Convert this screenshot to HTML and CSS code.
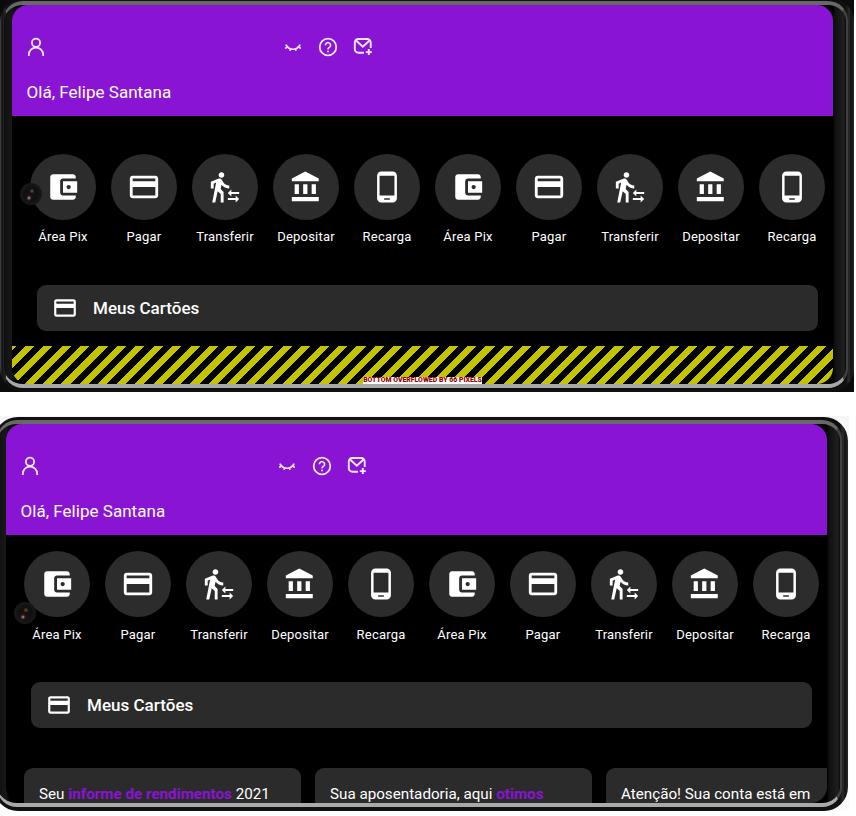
FILE: index.html
```html
<!DOCTYPE html>
<html lang="pt-BR">
<head>
<meta charset="utf-8">
<title>Início</title>
<link rel="stylesheet" href="styles.css">
</head>
<body>
<svg class="sprite" aria-hidden="true">
  <symbol id="wallet" viewBox="0 0 24 24"><path d="M21 18v1c0 1.1-.9 2-2 2H5c-1.11 0-2-.9-2-2V5c0-1.1.89-2 2-2h14c1.1 0 2 .9 2 2v1h-9c-1.11 0-2 .9-2 2v8c0 1.1.89 2 2 2h9zm-9-2h10V8H12v8zm4-2.5c-.83 0-1.5-.67-1.5-1.5s.67-1.5 1.5-1.5 1.5.67 1.5 1.5-.67 1.5-1.5 1.5z"/></symbol>
  <symbol id="card" viewBox="0 0 24 24"><path d="M20 4H4c-1.11 0-1.99.89-1.99 2L2 18c0 1.11.89 2 2 2h16c1.11 0 2-.89 2-2V6c0-1.11-.89-2-2-2zm0 14H4v-6h16v6zm0-10H4V6h16v2z"/></symbol>
  <symbol id="transfer" viewBox="0 0 24 24"><path d="M16.49 15.5v-1.75L14 16.25l2.49 2.5V17H22v-1.5zM19.51 19.75H14v1.5h5.51V23L22 20.5 19.51 18zM9.5 5.5c1.1 0 2-.9 2-2s-.9-2-2-2-2 .9-2 2 .9 2 2 2zM5.75 8.9L3 23h2.1l1.75-8L9 17v6h2v-7.55L8.95 13.4l.6-3C10.85 12 12.8 13 15 13v-2c-1.85 0-3.45-1-4.35-2.45l-.95-1.6C9.35 6.35 8.7 6 8 6c-.25 0-.5.05-.75.15L2 8.3V13h2V9.65l1.75-.75"/></symbol>
  <symbol id="bank" viewBox="0 0 24 24"><path d="M4 10v7h3v-7H4zm6 0v7h3v-7h-3zM2 22h19v-3H2v3zm14-12v7h3v-7h-3zm-4.5-9L2 6v2h19V6l-9.5-5z"/></symbol>
  <symbol id="phone" viewBox="0 0 24 24"><path d="M16 1H8C6.34 1 5 2.34 5 4v16c0 1.66 1.34 3 3 3h8c1.66 0 3-1.34 3-3V4c0-1.66-1.34-3-3-3zm-2 20h-4v-1h4v1zm3.25-3H6.75V4h10.5v14z"/></symbol>
  <symbol id="user" viewBox="0 0 20 20"><g fill="none" stroke="currentColor" stroke-width="1.8"><circle cx="10" cy="5.8" r="4.1"/><path d="M2.8 19v-1.200a7.200 7.200 0 0 1 14.400 0V19"/></g></symbol>
  <symbol id="eye" viewBox="0 0 20 20"><g fill="none" stroke="currentColor" stroke-width="1.700" stroke-linecap="round"><path d="M3.200 8.200C6.500 13.600 13.500 13.600 16.800 8.200"/><path d="M4.500 9.900l-1.700 1.100M7.700 11.900l-.6 1.200M12.300 11.900l.6 1.200M15.500 9.900l1.700 1.100"/></g></symbol>
  <symbol id="help" viewBox="0 0 20 20"><g fill="none" stroke="currentColor" stroke-width="1.800"><circle cx="10" cy="10" r="8.300"/><path d="M7.400 8.300a2.600 2.500 0 1 1 4.400 1.700c-.9.800-1.800 1.100-1.800 2.500" stroke-width="1.600"/><path d="M10 13.700v1.500"/></g></symbol>
  <symbol id="mail" viewBox="0 0 20 20"><g fill="none" stroke="currentColor" stroke-width="1.900"><path d="M11 15.700H5.300a3.500 3.500 0 0 1-3.500-3.500V5.500A3.500 3.500 0 0 1 5.300 2h8.900a3.500 3.500 0 0 1 3.500 3.500V11"/><path d="M2.800 3.300l7 6.500 7-6.500M12.800 15.100h6M15.800 12.100v6"/></g></symbol>
</svg>

<section class="shot shot-dark">
  <div class="device">
    <div class="bezel"></div>
    <main class="screen">
      <header class="header">
        <div class="toolbar">
          <svg class="glyph"><use href="#user"/></svg>
          <div class="tools"><svg class="glyph"><use href="#eye"/></svg><svg class="glyph"><use href="#help"/></svg><svg class="glyph"><use href="#mail"/></svg></div>
        </div>
        <p class="hello">Olá, Felipe Santana</p>
      </header>
      <nav class="actions actions-low">
        <div class="action"><span class="disc"><svg><use href="#wallet"/></svg></span><span>Área Pix</span></div>
        <div class="action"><span class="disc"><svg><use href="#card"/></svg></span><span>Pagar</span></div>
        <div class="action"><span class="disc"><svg><use href="#transfer"/></svg></span><span>Transferir</span></div>
        <div class="action"><span class="disc"><svg><use href="#bank"/></svg></span><span>Depositar</span></div>
        <div class="action"><span class="disc"><svg><use href="#phone"/></svg></span><span>Recarga</span></div>
        <div class="action"><span class="disc"><svg><use href="#wallet"/></svg></span><span>Área Pix</span></div>
        <div class="action"><span class="disc"><svg><use href="#card"/></svg></span><span>Pagar</span></div>
        <div class="action"><span class="disc"><svg><use href="#transfer"/></svg></span><span>Transferir</span></div>
        <div class="action"><span class="disc"><svg><use href="#bank"/></svg></span><span>Depositar</span></div>
        <div class="action"><span class="disc"><svg><use href="#phone"/></svg></span><span>Recarga</span></div>
      </nav>
      <div class="cards"><svg><use href="#card"/></svg><span>Meus Cartões</span></div>
      <div class="overflow"><span>BOTTOM OVERFLOWED BY 66 PIXELS</span></div>
      <i class="camera"></i>
    </main>
  </div>
</section>

<section class="shot shot-light">
  <div class="device">
    <div class="bezel"></div>
    <main class="screen">
      <header class="header">
        <div class="toolbar">
          <svg class="glyph"><use href="#user"/></svg>
          <div class="tools"><svg class="glyph"><use href="#eye"/></svg><svg class="glyph"><use href="#help"/></svg><svg class="glyph"><use href="#mail"/></svg></div>
        </div>
        <p class="hello">Olá, Felipe Santana</p>
      </header>
      <nav class="actions">
        <div class="action"><span class="disc"><svg><use href="#wallet"/></svg></span><span>Área Pix</span></div>
        <div class="action"><span class="disc"><svg><use href="#card"/></svg></span><span>Pagar</span></div>
        <div class="action"><span class="disc"><svg><use href="#transfer"/></svg></span><span>Transferir</span></div>
        <div class="action"><span class="disc"><svg><use href="#bank"/></svg></span><span>Depositar</span></div>
        <div class="action"><span class="disc"><svg><use href="#phone"/></svg></span><span>Recarga</span></div>
        <div class="action"><span class="disc"><svg><use href="#wallet"/></svg></span><span>Área Pix</span></div>
        <div class="action"><span class="disc"><svg><use href="#card"/></svg></span><span>Pagar</span></div>
        <div class="action"><span class="disc"><svg><use href="#transfer"/></svg></span><span>Transferir</span></div>
        <div class="action"><span class="disc"><svg><use href="#bank"/></svg></span><span>Depositar</span></div>
        <div class="action"><span class="disc"><svg><use href="#phone"/></svg></span><span>Recarga</span></div>
      </nav>
      <div class="cards"><svg><use href="#card"/></svg><span>Meus Cartões</span></div>
      <div class="tips">
        <p class="tip">Seu <b>informe de rendimentos</b> 2021</p>
        <p class="tip">Sua aposentadoria, aqui <b>otimos</b></p>
        <p class="tip">Atenção! Sua conta está em</p>
      </div>
      <i class="camera"></i>
    </main>
  </div>
</section>
</body>
</html>
```
FILE: styles.css
```css
* { box-sizing: border-box; }
html { overflow: hidden; }
body {
  margin: 0;
  height: 816px;
  overflow: hidden;
  background: #fff;
  color: #fff;
  font-family: Roboto, sans-serif;
}
p { margin: 0; }
svg { display: block; fill: currentColor; flex: none; }
.sprite { width: 0; height: 0; position: absolute; }

.shot { display: flex; overflow: hidden; }
.shot-dark {
  width: 854px;
  height: 392px;
  align-items: flex-end;
  background: #0b0b0b;
}
.shot-light {
  width: 849px;
  height: 395px;
  margin-top: 24px;
  padding-top: 1px;
  justify-content: flex-end;
  background: linear-gradient(#f4f5f7, #fafbfd);
}
.shot-light .device { margin-right: 1px; }

/* Phone body: dark rim, metal edge, then the screen */
.device {
  position: relative;
  flex: none;
  width: 854px;
  height: 394px;
  padding: 7px 21px 8px 12px;
  border-radius: 24px;
  background: linear-gradient(90deg, #4a4a4a 0, #101010 2px, #262626 5px, #101010 7px, #101010 846px, #2c2c2c 849px, #111 851px, #292929 854px);
}
.bezel {
  position: absolute;
  inset: 3px 6px 4px 3px;
  border-style: solid;
  border-width: 4px 2px 4px 1px;
  border-color: #686868 #414141 #a9a9a9 #222;
  border-radius: 20px;
  background: linear-gradient(90deg, #101010 0, #181818 8px, #000 12px, #000 829px, #101010 831px, #202020 840px, #080808 100%);
}
.screen {
  position: relative;
  width: 821px;
  height: 379px;
  overflow: hidden;
  border-radius: 16px;
  background: #000;
}

.header { height: 111px; padding: 32px 0 0 14px; background: #8a14d4; }
.toolbar { display: flex; gap: 236.700px; }
.tools { display: flex; gap: 15px; }
.glyph { width: 20px; height: 20px; color: #f5e9fc; }
.hello {
  margin: 24px 0 0 .5px;
  font-size: 17px;
  line-height: 22px;
  letter-spacing: .03px;
}

.actions { display: flex; gap: 15px; margin: 16px 0 0 18px; }
.actions-low { margin-top: 38px; }
.action {
  display: flex;
  flex: none;
  flex-direction: column;
  align-items: center;
  gap: 9px;
  width: 66px;
  font-size: 13px;
  line-height: 16px;
  letter-spacing: .2px;
}
.actions:not(.actions-low) .action { gap: 10px; }
.actions:not(.actions-low) { margin-bottom: -1px; }
.disc {
  display: grid;
  place-items: center;
  width: 66px;
  height: 66px;
  border-radius: 50%;
  background: #2c2c2c;
}
.disc svg { width: 34px; height: 34px; }

.cards {
  display: flex;
  align-items: center;
  gap: 15px;
  width: 781px;
  height: 46px;
  margin: 40px 0 0 25px;
  padding-left: 15px;
  border-radius: 9px;
  background: #2b2b2b;
  font-size: 17px;
  font-weight: 500;
  letter-spacing: .02px;
}
.cards svg { width: 26px; height: 26px; }

.overflow {
  display: flex;
  justify-content: center;
  align-items: flex-end;
  height: 38px;
  margin-top: 15px;
  background: repeating-linear-gradient(135deg, #c3c300 0 2.830px, #000 2.830px 9.330px, #c3c300 9.330px 13.030px);
}
.overflow span {
  background: #fff;
  color: #900;
  font-size: 6.900px;
  font-weight: 900;
  line-height: 7px;
}

.tips { display: flex; gap: 14px; margin: 40px 0 0 18px; }
.tip {
  flex: none;
  width: 277px;
  height: 120px;
  padding: 15px;
  border-radius: 9px;
  background: #2b2b2b;
  font-size: 15.200px;
  line-height: 22px;
  white-space: nowrap;
}
.tip b { color: #8a14d4; }

.camera {
  position: absolute;
  left: 8px;
  top: 178px;
  width: 22px;
  height: 22px;
  border-radius: 50%;
  background:
    radial-gradient(circle at 9px 15px, #b9a89f 0, #54303f 1.500px, transparent 3px),
    radial-gradient(circle at 12px 8px, #805020 0, transparent 2.500px),
    radial-gradient(circle, #1c1210 0, #101010 6px, #191919 11px);
}
```
